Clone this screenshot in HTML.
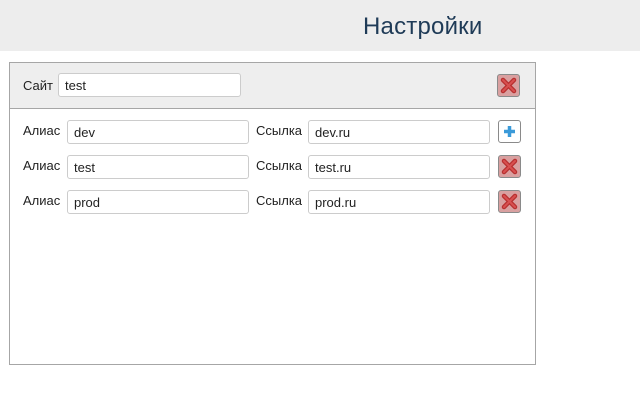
<!DOCTYPE html>
<html><head><meta charset="utf-8"><style>
body{margin:0;width:640px;height:400px;background:#fff;font-family:"Liberation Sans","DejaVu Sans",sans-serif;font-size:13px;color:#222;position:relative;overflow:hidden}
.hdr{position:absolute;left:0;top:0;width:640px;height:51px;background:#ededed}
.title{position:absolute;left:363px;top:13px;font-size:24px;color:#1f3b57;letter-spacing:0.2px}
.panel{position:absolute;left:9px;top:62px;width:525px;height:301px;border:1px solid #a6a6a6}
.ph{position:absolute;left:0;top:0;width:525px;height:45px;background:#eeeeee;border-bottom:1px solid #a6a6a6}
.lbl{position:absolute;font-size:13px}
.inp{position:absolute;height:22px;border:1px solid #ccc;border-radius:3px;background:#fff;box-sizing:border-box;padding-left:6px;line-height:22px;font-size:13px;padding-top:1px}
.btn{position:absolute;width:23px;height:23px;box-sizing:border-box;border:1px solid #8a8a8a;border-radius:3px}
.del{background:#d9a0a0}
.add{background:#fff}
</style></head><body>
<div class="hdr"></div>
<div class="title">Настройки</div>
<div class="panel"><div class="ph"></div></div>
<div class="lbl" style="left:23px;top:78px">Сайт</div>
<div class="inp" style="left:58px;top:73px;width:183px;height:24px">test</div>
<div class="btn del" style="left:497px;top:74px"><svg width="21" height="21" viewBox="0 0 21 21"><path d="M5 5L16 16M16 5L5 16" stroke="#b83030" stroke-width="4.5" stroke-linecap="round"/><path d="M5 5L16 16M16 5L5 16" stroke="#d85050" stroke-width="2" stroke-linecap="round"/></svg></div>

<div class="lbl" style="left:23px;top:123px">Алиас</div>
<div class="inp" style="left:67px;top:120px;width:182px;height:24px">dev</div>
<div class="lbl" style="left:256px;top:123px">Ссылка</div>
<div class="inp" style="left:308px;top:120px;width:182px;height:24px">dev.ru</div>
<div class="btn add" style="left:498px;top:120px"><svg width="21" height="21" viewBox="0 0 21 21"><path d="M10.5 5V16M5 10.5H16" stroke="#3a9ad9" stroke-width="3.5"/></svg></div>

<div class="lbl" style="left:23px;top:158px">Алиас</div>
<div class="inp" style="left:67px;top:155px;width:182px;height:24px">test</div>
<div class="lbl" style="left:256px;top:158px">Ссылка</div>
<div class="inp" style="left:308px;top:155px;width:182px;height:24px">test.ru</div>
<div class="btn del" style="left:498px;top:155px"><svg width="21" height="21" viewBox="0 0 21 21"><path d="M5 5L16 16M16 5L5 16" stroke="#b83030" stroke-width="4.5" stroke-linecap="round"/><path d="M5 5L16 16M16 5L5 16" stroke="#d85050" stroke-width="2" stroke-linecap="round"/></svg></div>

<div class="lbl" style="left:23px;top:193px">Алиас</div>
<div class="inp" style="left:67px;top:190px;width:182px;height:24px">prod</div>
<div class="lbl" style="left:256px;top:193px">Ссылка</div>
<div class="inp" style="left:308px;top:190px;width:182px;height:24px">prod.ru</div>
<div class="btn del" style="left:498px;top:190px"><svg width="21" height="21" viewBox="0 0 21 21"><path d="M5 5L16 16M16 5L5 16" stroke="#b83030" stroke-width="4.5" stroke-linecap="round"/><path d="M5 5L16 16M16 5L5 16" stroke="#d85050" stroke-width="2" stroke-linecap="round"/></svg></div>
</body></html>
